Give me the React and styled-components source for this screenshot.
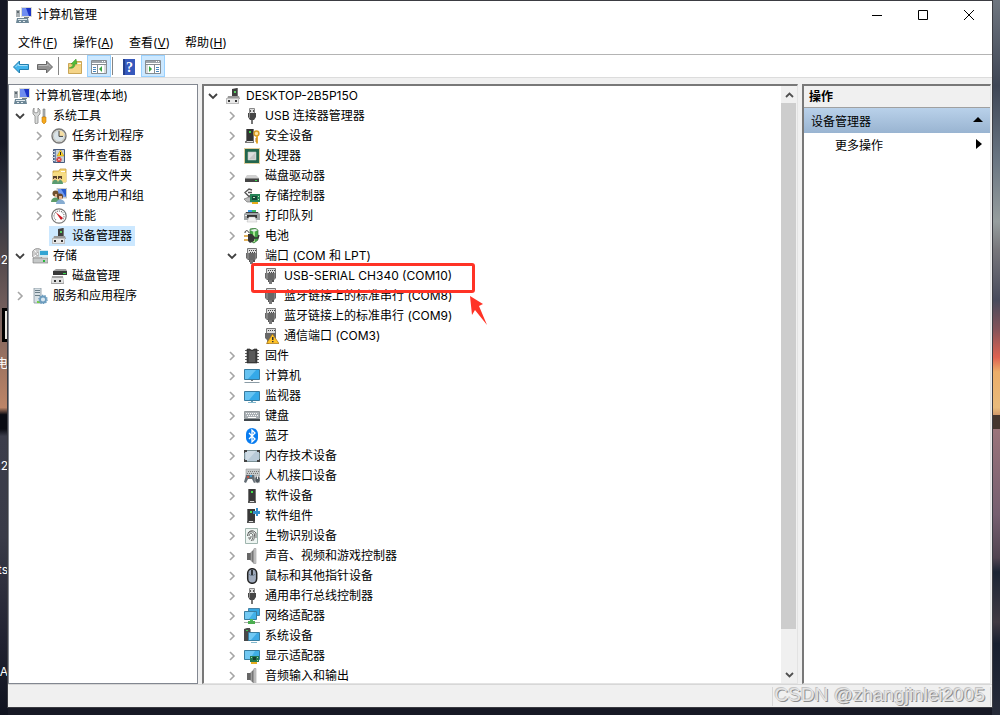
import styled, { createGlobalStyle } from "styled-components";

const GlobalStyle = createGlobalStyle`
  * {
    box-sizing: border-box;
  }
  body {
    margin: 0;
    font-family: Inter, "Noto Sans CJK SC", sans-serif;
    font-size: 12px;
    color: #000;
    overflow: hidden;
  }
  button {
    font: inherit;
    color: inherit;
    border: 0;
    padding: 0;
    background: none;
  }
`;

const icons = {
  computer: (
    <>
      <path d="M5 0h11v10H5z" fill="#d9dcd6" />
      <path d="M6 1h9v8H6z" fill="#1c35c8" />
      <path d="M6 1h4l3 8H6z" fill="#6f8df0" />
      <path d="M0 3h4v7H0z" fill="#a9b0b4" />
      <path d="M1 4h2v2H1z" fill="#5e6a70" />
      <path d="M8 10h5v1H8z" fill="#777f83" />
      <path d="M1 11h11l1 5H0z" fill="#6d8796" />
      <path d="M2 12h9v1H2zM3 14h2v1H3zM7 14h2v1H7z" fill="#e2eaee" />
    </>
  ),
  tools: (
    <>
      <path d="M2 0v4l2 1 2-1V0l2 2v4L6 8v7l-2 1-1-1V8L1 6V2z" fill="#d8dad9" stroke="#888" strokeWidth=".8" />
      <path d="M11 1h2v8h-2z" fill="#b4b9ba" stroke="#666" strokeWidth=".5" />
      <path d="M10 9h4v5l-2 2-2-2z" fill="#f5a91c" stroke="#c57806" strokeWidth=".6" />
    </>
  ),
  clock: (
    <>
      <circle cx="8" cy="8" r="7" fill="#f2efe1" stroke="#777" strokeWidth="1.4" />
      <circle cx="8" cy="8" r="5.6" fill="#d9e3e8" stroke="#c2c5c2" />
      <path d="M8 2.5A5.5 5.5 0 0 1 13.5 8H8z" fill="#f6dfa5" />
      <path d="M8 3v5.4h4" fill="none" stroke="#444" />
    </>
  ),
  events: (
    <>
      <path d="M2.5 1.5h11v13h-11z" fill="#7289ad" stroke="#485c7e" />
      <path d="M5 2h8v12H5z" fill="#c9d2da" />
      <path d="M1 3.5h3M1 6.5h3M1 9.5h3M1 12.5h3" stroke="#d5dbe2" />
      <path d="M9.5 2l3.5 6H6z" fill="#ffd629" stroke="#b18500" strokeWidth=".5" />
      <path d="M9.5 4v3" stroke="#222" />
      <circle cx="8" cy="11.5" r="2.6" fill="#d53a38" />
      <path d="M7 10.5l2 2m0-2l-2 2" stroke="#fff" strokeWidth=".8" />
    </>
  ),
  sharedFolder: (
    <>
      <path d="M2 3h6l1-2h6v13H2z" fill="#f5d878" stroke="#c69a36" strokeWidth=".8" />
      <path d="M10 3h4v1h-4z" fill="#fff" />
      <path d="M2 5h13v9H2z" fill="#f6dc84" />
      <path d="M2 8h4v3H2zM7 8h4v3H7z" fill="#57422c" />
      <path d="M1 16c0-5 6-6 6-1 0-4 5-4 5 1z" fill="#5b9b70" />
      <path d="M3 10h2v2H3zM8 10h2v2H8z" fill="#e5bb91" />
    </>
  ),
  users: (
    <>
      <path d="M6 0h10v10H6z" fill="#d7d9d7" stroke="#a6a8a7" strokeWidth=".6" />
      <path d="M7 1h8v8H7z" fill="#2458cc" />
      <path d="M7 1h3l5 8H7z" fill="#7199ed" />
      <circle cx="4.5" cy="5.5" r="3" fill="#70512e" />
      <path d="M0 14c0-6 9-6 9 0z" fill="#5c9b68" />
      <circle cx="9" cy="8.5" r="3" fill="#65462c" />
      <path d="M8 8h3v3H8zM4 6h2v3H4z" fill="#e6b48c" />
      <path d="M5 16c0-6 9-6 9 0z" fill="#86acd1" />
    </>
  ),
  performance: (
    <>
      <circle cx="8" cy="8" r="7.2" fill="#fff" stroke="#777" strokeWidth="1.2" />
      <path d="M5 12A5 5 0 1 1 11 12" fill="none" stroke="#777" strokeWidth="1.2" strokeDasharray="1 1" />
      <path d="M4.5 4l5.5 8 2-2z" fill="#c91820" />
    </>
  ),
  device: (
    <>
      <path d="M7 1l5-1v9H7z" fill="#3f3f3f" />
      <path d="M12 0h1v9h-1z" fill="#777" />
      <path d="M9 3h2v2H9z" fill="#59ce62" />
      <path d="M3 8h11l1 3H2z" fill="#989898" />
      <path d="M1 10h13v6H1z" fill="#bdbdbd" />
      <path d="M2 11h11v4H2z" fill="#e8e8e8" />
      <path d="M3 12h2v2H3zM10 12h2v2h-2z" fill="#353535" />
    </>
  ),
  storage: (
    <>
      <circle cx="5.5" cy="6" r="5.5" fill="#ccc" stroke="#8a8a8a" strokeWidth=".8" />
      <path d="M5.5 6l-3-4M5.5 6l-4 3" stroke="#fff" />
      <circle cx="5.5" cy="6" r="1.5" fill="#eee" stroke="#888" strokeWidth=".6" />
      <path d="M7 2h9v7H7z" fill="#d5e9ee" />
      <path d="M8 3h8v4H8z" fill="#32a5d3" />
      <path d="M1 10h15v5H1z" fill="#c5c8c8" stroke="#777" strokeWidth=".6" />
      <path d="M11 12h2v2h-2z" fill="#27b93a" />
    </>
  ),
  disk: (
    <>
      <path d="M2 3l3-2h10l1 2v4H2z" fill="#9b9b9b" />
      <path d="M2 3h14v4H2z" fill="#383838" />
      <path d="M12 5h3v1h-3z" fill="#39dc4b" />
      <path d="M1 8h11l1 8H0z" fill="#a3a3a3" />
      <path d="M1 10h11v5H1z" fill="#e2e2e2" />
      <path d="M3 12h2v2H3zM8 12h2v2H8z" fill="#333" />
    </>
  ),
  services: (
    <>
      <path d="M2 0h7v15H2z" fill="#d7e0e5" stroke="#85969e" strokeWidth=".8" />
      <path d="M3 2.5h5M3 4.5h5M3 7.5h5" stroke="#6b7f89" />
      <path d="M5 13h3v2H5z" fill="#75d243" />
      <circle cx="11" cy="11.5" r="3" fill="#d8e7f1" stroke="#6c9cbe" strokeWidth="1.8" />
      <circle cx="11" cy="11.5" r="4.2" fill="none" stroke="#6c9cbe" strokeWidth="1.2" strokeDasharray="1.3 1.3" />
    </>
  ),
  usb: (
    <>
      <path d="M5.5.5h5v5h-5z" fill="#ddd" stroke="#888" />
      <path d="M6 2h1v2H6zM9 2h1v2H9z" fill="#555" />
      <path d="M4 5h8v4l-2 3H6L4 9z" fill="#454545" />
      <path d="M7 12h2v4H7z" fill="#777" />
      <path d="M5 5h1v5H5z" fill="#888" />
    </>
  ),
  security: (
    <>
      <path d="M2 1h8v12H2z" fill="#333" />
      <path d="M2 1h1v12H2zM9 1h1v12H9z" fill="#777" />
      <path d="M5 3h2v2H5z" fill="#38d647" />
      <path d="M1 13h9v2H1z" fill="#777" />
      <path d="M3 13h6v1H3z" fill="#ddd" />
      <circle cx="12.5" cy="5.5" r="2.4" fill="#ffe5a0" stroke="#d99b22" strokeWidth="1.5" />
      <path d="M12 8h2v7l-1 1-1-1z" fill="#e5a92f" />
      <path d="M11 11h2M11 13h2" stroke="#bf7e14" />
    </>
  ),
  processor: (
    <>
      <path d="M.5.5h15v15H.5z" fill="none" stroke="#bd9d38" strokeDasharray="1 1" />
      <path d="M1 1h14v14H1z" fill="#23664d" />
      <path d="M4 4h8v8H4z" fill="#dedede" stroke="#b6c5bd" strokeWidth=".6" />
      <path d="M5 11l6-6v6z" fill="#c6c6c6" />
    </>
  ),
  drive: (
    <>
      <path d="M3 7h9l3 3H1z" fill="#d1d1d1" />
      <path d="M1 10h14v4H1z" fill="#444" />
      <path d="M1 10h14v1H1z" fill="#888" />
      <path d="M11 12h2v1h-2z" fill="#36dc4c" />
    </>
  ),
  controller: (
    <>
      <path d="M8 2L5 1 1 4.5l4 4 3-2M4 4.5h4" fill="none" stroke="#555" strokeWidth="1.4" />
      <path d="M0 11l5-2 5 2v3H3z" fill="#bbb" stroke="#666" strokeWidth=".6" />
      <path d="M6 6h10v8H6z" fill="#248456" />
      <path d="M8 8h5v4H8z" fill="#164637" />
      <path d="M9 9h2v1H9zM14 8h1v1h-1zM14 11h1v1h-1z" fill="#bce8bd" />
      <path d="M8 14h6v2H8z" fill="#e7ad1c" />
    </>
  ),
  printer: (
    <>
      <path d="M4 2h4v2H4z" fill="#3999e5" />
      <path d="M8 2h4v2H8z" fill="#36b968" />
      <path d="M2 4h12l2 2v6H0V6z" fill="#9fa4a6" />
      <path d="M2 4h12v1H2z" fill="#434343" />
      <path d="M3 7h10v3H3z" fill="#333" />
      <path d="M5 9h6l2 5H3z" fill="#f0f0f0" stroke="#aaa" strokeWidth=".4" />
      <path d="M1 7h2v1H1z" fill="#eee" />
    </>
  ),
  battery: (
    <>
      <path d="M6 1l5-1 3 2v10l-4 3-4-2z" fill="#45a646" stroke="#3c743d" strokeWidth=".7" />
      <path d="M6 2l5-1 3 1-4 2z" fill="#e9eeee" />
      <path d="M10 4v10" stroke="#a8e891" strokeWidth="2" />
      <path d="M1 5c0-4 4-2 4 0" fill="none" stroke="#333" />
      <path d="M0 8h4M0 12h4" stroke="#d89824" strokeWidth="1.5" />
      <path d="M4 6h4l3 3-1 4-4 2-2-2z" fill="#363636" />
      <path d="M10 10h4l1-3" fill="none" stroke="#333" strokeWidth="1.4" />
    </>
  ),
  port: (
    <>
      <path d="M3.5.5h9v5h-9z" fill="#ddd" stroke="#777" />
      <path d="M5 2h1v1H5zM7 2h1v1H7zM9 2h1v1H9zM11 2h1v1h-1zM6 4h1v1H6zM8 4h1v1H8zM10 4h1v1h-1z" fill="#444" />
      <path d="M2 5h11v5l-2 2H4l-2-2z" fill="#686868" />
      <path d="M3 5h2v6H3zM11 5h1v6h-1z" fill="#818181" />
      <path d="M5 12h1v2H5zM9 12h2v2H9z" fill="#555" />
      <path d="M6 12h3v4H6z" fill="#777" />
    </>
  ),
  portWarning: (
    <>
      <path d="M3.5.5h9v5h-9z" fill="#ddd" stroke="#777" />
      <path d="M5 2h1v1H5zM7 2h1v1H7zM9 2h1v1H9zM11 2h1v1h-1z" fill="#444" />
      <path d="M2 5h11v5l-2 2H4l-2-2z" fill="#686868" />
      <path d="M4 12h2v4H4z" fill="#777" />
      <path d="M9.5 6L16 15.5H3.5z" fill="#ffc328" stroke="#a87415" strokeWidth=".7" />
      <path d="M9 9h1.5v3H9zM9 13h1.5v1.2H9z" fill="#333" />
    </>
  ),
  firmware: (
    <>
      <path d="M1 2.5h14M1 5.5h14M1 8.5h14M1 11.5h14M1 14.5h14" stroke="#666" />
      <path d="M3 1h3l1 1h2l1-1h3v14H3z" fill="#424242" stroke="#222" strokeWidth=".6" />
      <path d="M5 3h6v11H5z" fill="#5a5a5a" />
    </>
  ),
  pc: (
    <>
      <path d="M.5 1.5h15v10H.5z" fill="#35a9e8" stroke="#387b9f" />
      <path d="M1 2h11l-8 9H1z" fill="#66c3f2" />
      <path d="M7 12h2v1H7z" fill="#777" />
      <path d="M1 14h14l1 1H0z" fill="#8b9ca6" />
    </>
  ),
  monitor: (
    <>
      <path d="M.5 3.5h15v9H.5z" fill="#35a9e8" stroke="#387b9f" />
      <path d="M1 4h11l-7 8H1z" fill="#66c3f2" />
      <path d="M7 13h2v1H7z" fill="#6699b0" />
      <path d="M4 14h8v1H4z" fill="#83b8cd" />
    </>
  ),
  keyboard: (
    <>
      <path d="M.5 3.5h15v7H.5z" fill="#a9afb4" stroke="#91979a" />
      <path d="M2 5.5h12M3 7.5h11" stroke="#f7f7f7" strokeDasharray="1 1" />
      <path d="M4 9.5h8" stroke="#fff" />
      <path d="M0 11h16v2H0z" fill="#41484d" />
    </>
  ),
  bluetooth: (
    <>
      <rect x="2" width="12" height="16" rx="6" fill="#087cf0" />
      <path d="M5 5l6 6-3 3V2l3 3-6 6" fill="none" stroke="#fff" strokeWidth="1.3" />
    </>
  ),
  memory: (
    <>
      <path d="M0 2h16v12H0z" fill="#444" />
      <path d="M3 2h10v2h2v8h-2v2H3v-2H1V4h2z" fill="#b8cad8" />
      <path d="M3 3h9l-8 9H2V4h1z" fill="#cedbe5" />
      <path d="M3 2.5h10M3 13.5h10M.5 5v6M15.5 5v6" stroke="#7b9095" />
    </>
  ),
  hid: (
    <>
      <path d="M2 1h14v7H2z" fill="#c5c9ca" stroke="#999" strokeWidth=".6" />
      <path d="M4 3.5h11M3 5.5h12" stroke="#777" strokeDasharray="1 1" />
      <path d="M2 7h8l2 7-2 1-2-4H4l-2 4-2-1z" fill="#626b73" />
      <circle cx="4" cy="9" r="1" fill="#e2503b" />
      <circle cx="7" cy="8" r="1" fill="#40a9ed" />
      <rect x="11" y="8" width="5" height="7" rx="2.5" fill="#505960" stroke="#d2d2d2" strokeWidth=".6" />
      <path d="M13.5 8v3" stroke="#eee" />
    </>
  ),
  software: (
    <>
      <path d="M4 1h8v12H4z" fill="#393939" />
      <path d="M4 1h1v12H4zM11 1h1v12h-1z" fill="#777" />
      <path d="M7 3h2v2H7z" fill="#43de4b" />
      <path d="M4 13h8v2H4z" fill="#555" />
      <path d="M6 13h4v1H6z" fill="#ddd" />
    </>
  ),
  component: (
    <>
      <path d="M3 1h8v12H3z" fill="#383838" />
      <path d="M3 1h1v12H3z" fill="#777" />
      <path d="M6 3h2v2H6z" fill="#43de4b" />
      <path d="M3 13h8v2H3z" fill="#555" />
      <path d="M5 13h4v1H5z" fill="#ddd" />
      <path d="M9 3h3V0h2v3h2v3h-2v2h-2V6H9z" fill="#328dcb" />
    </>
  ),
  biometric: (
    <>
      <path d="M1.5.5h12v15h-12z" fill="#eef5f2" stroke="#9fb5ae" />
      <path
        d="M4 5c2-3 6-3 8 0v5M3.5 8c0-6 7-5 7-1 0 4-1 5-2 6M5 8c0-4 4-3 4 0 0 2-1 4-2 5M5 9c0 3 1 3 2 0V8"
        fill="none"
        stroke="#555"
        strokeWidth=".9"
      />
    </>
  ),
  sound: (
    <>
      <path d="M3 5h3v7H3z" fill="#666" />
      <path d="M6 5l4-4v15l-4-4z" fill="#9c9c9c" />
      <path d="M10 .5h2v15h-2z" fill="#cbcbcb" stroke="#888" strokeWidth=".5" />
      <path d="M6.5 5v7M8.5 3v11" stroke="#666" strokeWidth=".7" />
    </>
  ),
  mouse: (
    <>
      <rect x="3.7" y=".7" width="9" height="14.6" rx="4.5" fill="#9faabc" stroke="#242424" strokeWidth="1.5" />
      <path d="M5 6c1 2 5 2 6 0" fill="none" stroke="#67788b" />
      <path d="M7 2h2v5H7z" fill="#303438" />
    </>
  ),
  network: (
    <>
      <path d="M4.5.5h11v7h-11z" fill="#37a7e2" stroke="#4783a5" />
      <path d="M.5 3.5h12v8H.5z" fill="#42b1e9" stroke="#397d9f" />
      <path d="M1 4h9l-5 7H1z" fill="#73caf4" />
      <path d="M6 11h3v3H6z" fill="#4dbb5b" />
      <path d="M0 14h16v1H0z" fill="#aaa" />
      <path d="M4 13h7v3H4z" fill="#4cad50" />
    </>
  ),
  system: (
    <>
      <path d="M0 1l3-1h3v13H0z" fill="#484848" />
      <path d="M2 2h2v1H2z" fill="#43c557" />
      <path d="M6 1h1v11H6z" fill="#999" />
      <path d="M4.5 4.5h11v8h-11z" fill="#3da9e5" stroke="#397d9f" />
      <path d="M5 5h8l-6 7H5z" fill="#70c8f3" />
      <path d="M7 14h6v1H7z" fill="#83b8cd" />
    </>
  ),
  display: (
    <>
      <path d="M.5 2.5h15v9H.5z" fill="#3fb0e8" stroke="#397d9f" />
      <path d="M1 3h10l-5 8H1z" fill="#70c8f3" />
      <path d="M6 8h9v6H6z" fill="#237850" />
      <path d="M9 9h3v3H9z" fill="#163e31" />
      <path d="M7 9h1v1H7zM13 9h1v1h-1zM13 12h1v1h-1z" fill="#a5dba7" />
      <path d="M7 14h6v2H7z" fill="#e6ae20" />
    </>
  ),
  back: (
    <>
      <path d="M.5 8L6.5 2v3.5h9v5h-9V14z" fill="#42b4ec" stroke="#237eae" />
      <path d="M2.5 8l3-3v1.5h9" fill="none" stroke="#a6e0fa" />
    </>
  ),
  forward: (
    <>
      <path d="M15.5 8l-6-6v3.5h-9v5h9V14z" fill="#929292" stroke="#686868" />
      <path d="M1.5 6.5h9V5l3 3" fill="none" stroke="#bbb" />
    </>
  ),
  folderUp: (
    <>
      <path d="M1.5 4.5h7l1-2h5v12h-13z" fill="#f2cf78" stroke="#be963e" strokeWidth=".8" />
      <path d="M10 4h4v1h-4z" fill="#fff" />
      <path d="M2 7h12v7H2z" fill="#f4d488" />
      <path d="M2 9c3-1 4-2 4-4H4l5-5 1 5H8c0 3-2 5-6 4z" fill="#54bd38" stroke="#398b28" strokeWidth=".5" />
    </>
  ),
  treePane: (
    <>
      <path d="M.5 1.5h15v13H.5z" fill="#fff" stroke="#858c92" />
      <path d="M1 2h14v2H1z" fill="#9ca3a9" />
      <path d="M11 2.5h1M13 2.5h1" stroke="#fff" />
      <path d="M1 5.5h14M6.5 6v8" stroke="#858c92" />
      <path d="M2 8.5h3M2 10.5h3M2 12.5h3" stroke="#4786bd" />
      <path d="M11 7v6L8 10z" fill="#3ba642" />
      <path d="M13 6h2v8h-2z" fill="#dadada" />
    </>
  ),
  help: (
    <>
      <path d="M2 0h12v16H2z" fill="#3658bc" />
      <path d="M2 0h2v16H2z" fill="#24408c" />
      <text x="5" y="13" fontFamily="Liberation Serif" fontSize="14" fontWeight="700" fill="#fff">?</text>
    </>
  ),
  actionPane: (
    <>
      <path d="M.5 1.5h15v13H.5z" fill="#fff" stroke="#858c92" />
      <path d="M1 2h14v2H1z" fill="#9ca3a9" />
      <path d="M11 2.5h1M13 2.5h1" stroke="#fff" />
      <path d="M1 5.5h14M9.5 6v8" stroke="#858c92" />
      <path d="M11 8.5h3M11 10.5h3M11 12.5h3" stroke="#4786bd" />
      <path d="M4 7v6l3-3z" fill="#3ba642" />
      <path d="M1 6h2v8H1z" fill="#dadada" />
    </>
  ),
};

const Icon = ({ name }) => (
  <IconSvg viewBox="0 0 16 16" aria-hidden="true">
    {icons[name]}
  </IconSvg>
);

const consoleTree = {
  label: "计算机管理(本地)",
  icon: "computer",
  bare: true,
  children: [
    {
      label: "系统工具",
      icon: "tools",
      children: [
        { label: "任务计划程序", icon: "clock", closed: true },
        { label: "事件查看器", icon: "events", closed: true },
        { label: "共享文件夹", icon: "sharedFolder", closed: true },
        { label: "本地用户和组", icon: "users", closed: true },
        { label: "性能", icon: "performance", closed: true },
        { label: "设备管理器", icon: "device", selected: true },
      ],
    },
    {
      label: "存储",
      icon: "storage",
      children: [{ label: "磁盘管理", icon: "disk" }],
    },
    { label: "服务和应用程序", icon: "services", closed: true },
  ],
};

const deviceTree = {
  label: "DESKTOP-2B5P15O",
  icon: "device",
  children: [
    { label: "USB 连接器管理器", icon: "usb", closed: true },
    { label: "安全设备", icon: "security", closed: true },
    { label: "处理器", icon: "processor", closed: true },
    { label: "磁盘驱动器", icon: "drive", closed: true },
    { label: "存储控制器", icon: "controller", closed: true },
    { label: "打印队列", icon: "printer", closed: true },
    { label: "电池", icon: "battery", closed: true },
    {
      label: "端口 (COM 和 LPT)",
      icon: "port",
      children: [
        { label: "USB-SERIAL CH340 (COM10)", icon: "port", marked: true },
        { label: "蓝牙链接上的标准串行 (COM8)", icon: "port" },
        { label: "蓝牙链接上的标准串行 (COM9)", icon: "port" },
        { label: "通信端口 (COM3)", icon: "portWarning" },
      ],
    },
    { label: "固件", icon: "firmware", closed: true },
    { label: "计算机", icon: "pc", closed: true },
    { label: "监视器", icon: "monitor", closed: true },
    { label: "键盘", icon: "keyboard", closed: true },
    { label: "蓝牙", icon: "bluetooth", closed: true },
    { label: "内存技术设备", icon: "memory", closed: true },
    { label: "人机接口设备", icon: "hid", closed: true },
    { label: "软件设备", icon: "software", closed: true },
    { label: "软件组件", icon: "component", closed: true },
    { label: "生物识别设备", icon: "biometric", closed: true },
    { label: "声音、视频和游戏控制器", icon: "sound", closed: true },
    { label: "鼠标和其他指针设备", icon: "mouse", closed: true },
    { label: "通用串行总线控制器", icon: "usb", closed: true },
    { label: "网络适配器", icon: "network", closed: true },
    { label: "系统设备", icon: "system", closed: true },
    { label: "显示适配器", icon: "display", closed: true },
    { label: "音频输入和输出", icon: "sound", closed: true },
  ],
};

const menus = [
  ["文件", "F"],
  ["操作", "A"],
  ["查看", "V"],
  ["帮助", "H"],
];

const Chevron = ({ open }) => (
  <svg width="10" height="10" viewBox="0 0 10 10" aria-hidden="true">
    <path
      d={open ? "M1 3l4 4 4-4" : "M3 1l4 4-4 4"}
      fill="none"
      stroke={open ? "#404040" : "#a6a6a6"}
      strokeWidth={open ? "1.8" : "1.6"}
    />
  </svg>
);

const TreeItem = ({ node }) => {
  const expandable = node.closed || node.children;
  return (
    <li role="treeitem" aria-expanded={expandable ? !node.closed : undefined}>
      <Row>
        {!node.bare && (
          <Toggle as={expandable ? "button" : "span"} aria-label={expandable ? node.label : undefined}>
            {expandable && <Chevron open={!node.closed} />}
          </Toggle>
        )}
        <Node $selected={node.selected}>
          <Icon name={node.icon} />
          {node.label}
        </Node>
        {node.marked && (
          <>
            <Frame />
            <Pointer viewBox="0 0 20 32" aria-hidden="true">
              <path d="M1 1l13 8-4 2 8 19L6 15l-3 5z" fill="#ff3326" />
            </Pointer>
          </>
        )}
      </Row>
      {node.children && (
        <Group role="group" $flush={node.bare}>
          {node.children.map((child) => (
            <TreeItem key={child.label} node={child} />
          ))}
        </Group>
      )}
    </li>
  );
};

const App = () => {
  return (
    <Desktop>
      <GlobalStyle />
      <Shortcut $top={252}>02</Shortcut>
      <Thumbnail />
      <Shortcut $top={356}>电</Shortcut>
      <Shortcut $top={458}>22</Shortcut>
      <Shortcut $top={562}>ts</Shortcut>
      <Shortcut $top={664}>DA</Shortcut>
      <Window>
        <TitleBar>
          <Icon name="computer" />
          <Title>计算机管理</Title>
          <Caption aria-label="最小化">
            <CaptionIcon viewBox="0 0 12 12">
              <path d="M1 6.5h10" />
            </CaptionIcon>
          </Caption>
          <Caption aria-label="最大化">
            <CaptionIcon viewBox="0 0 12 12">
              <path d="M1.5 1.5h9v9h-9z" />
            </CaptionIcon>
          </Caption>
          <Caption aria-label="关闭">
            <CaptionIcon viewBox="0 0 12 12">
              <path d="M1 1l10 10M11 1L1 11" />
            </CaptionIcon>
          </Caption>
        </TitleBar>
        <MenuBar>
          {menus.map(([label, key]) => (
            <button key={key}>
              {label}(<u>{key}</u>)
            </button>
          ))}
        </MenuBar>
        <Toolbar>
          <Tool aria-label="后退"><Icon name="back" /></Tool>
          <Tool aria-label="前进"><Icon name="forward" /></Tool>
          <Separator />
          <Tool aria-label="向上"><Icon name="folderUp" /></Tool>
          <Tool $active aria-label="显示控制台树"><Icon name="treePane" /></Tool>
          <Separator />
          <Tool aria-label="帮助"><Icon name="help" /></Tool>
          <Tool $active aria-label="显示操作窗格"><Icon name="actionPane" /></Tool>
        </Toolbar>
        <Panes>
          <ConsolePane>
            <Tree role="tree" $inset={3}>
              <TreeItem node={consoleTree} />
            </Tree>
          </ConsolePane>
          <DevicePane>
            <Tree role="tree" $inset={1}>
              <TreeItem node={deviceTree} />
            </Tree>
            <Scrollbar>
              <ScrollButton aria-label="向上滚动">
                <svg width="9" height="6" viewBox="0 0 9 6">
                  <path d="M1 5l3.5-3.5L8 5" fill="none" stroke="#505050" strokeWidth="1.8" />
                </svg>
              </ScrollButton>
              <Track>
                <Thumb />
              </Track>
              <ScrollButton aria-label="向下滚动">
                <svg width="9" height="6" viewBox="0 0 9 6">
                  <path d="M1 1l3.5 3.5L8 1" fill="none" stroke="#505050" strokeWidth="1.8" />
                </svg>
              </ScrollButton>
            </Scrollbar>
          </DevicePane>
          <ActionPane>
            <ActionTitle>操作</ActionTitle>
            <ActionGroup>
              设备管理器
              <svg width="10" height="6" viewBox="0 0 10 6"><path d="M0 5l5-5 5 5z" /></svg>
            </ActionGroup>
            <ActionLink>
              更多操作
              <svg width="6" height="10" viewBox="0 0 6 10"><path d="M0 0l6 5-6 5z" /></svg>
            </ActionLink>
          </ActionPane>
        </Panes>
        <StatusBar>
          <StatusCell $width={133} />
          <StatusCell $width={85} />
          <StatusCell $width={2} />
        </StatusBar>
      </Window>
      <Watermark>CSDN @zhangjinlei2005</Watermark>
    </Desktop>
  );
};

export default App;

const IconSvg = styled.svg`
  width: 16px;
  height: 16px;
  flex: none;
`;

const Desktop = styled.main`
  position: relative;
  height: 100vh;
  padding: 1px 8px 8px;
  background:
    linear-gradient(#151724 0 20%, #343744 30%, #4d4549 35%, #77615e 44%, #a47762 52%, #bd8568 57%, #090b13 58% 60%, #3b3d4b 61%, #393b48 75%, #202231 90%, #10131f) left / 8px 100% no-repeat,
    linear-gradient(#6f7680 0, #3f4655 12%, #687481 22%, #969e9e 31%, #77767b 35%, #484b5c 42%, #83535a 46%, #df6251 50%, #ecad68 52%, #e8bb7c 57%, #d29a6b 58%, #45362f 58% 60%, #9b747b 60%, #765f70 72%, #514451 78%, #1b2434 80%, #413a43 87%, #182030 90%, #272b39) right / 8px 100% no-repeat,
    #171925;
`;

const Shortcut = styled.span`
  position: absolute;
  top: ${(p) => p.$top}px;
  left: 0;
  width: 8px;
  height: 16px;
  line-height: 16px;
  overflow: hidden;
  direction: rtl;
  color: #fff;
`;

const Thumbnail = styled.span`
  position: absolute;
  top: 308px;
  left: 2px;
  width: 20px;
  height: 34px;
  border: 3px solid #000;
  background: #e8e6e0;
`;

const Window = styled.section`
  position: relative;
  display: flex;
  flex-direction: column;
  height: 100%;
  background: #f0f0f0;
  box-shadow: 0 0 0 1px #3b3c42;
`;

const TitleBar = styled.header`
  display: flex;
  align-items: center;
  height: 28px;
  padding-left: 8px;
  background: #fff;
`;

const Title = styled.h1`
  flex: 1;
  margin: 0;
  padding-left: 5px;
  font-size: 12px;
  line-height: 16px;
  font-weight: 400;
`;

const Caption = styled.button`
  display: grid;
  place-items: center;
  width: 46px;
  height: 28px;
`;

const CaptionIcon = styled.svg`
  width: 12px;
  height: 12px;
  fill: none;
  stroke: #000;
`;

const MenuBar = styled.nav`
  display: flex;
  align-items: center;
  gap: 15px;
  height: 26px;
  padding-left: 10px;
  background: #fff;
  border-bottom: 1px solid #b4b4b4;
`;

const Toolbar = styled.div`
  display: flex;
  align-items: center;
  height: 23px;
  padding-left: 1px;
  background: #fff;
  border-bottom: 1px solid #dcdcdc;
`;

const Tool = styled.button`
  display: grid;
  place-items: center;
  width: 24px;
  height: 22px;
  padding-top: 1px;
  background: ${(p) => (p.$active ? "#cce8ff" : "transparent")};
  border: ${(p) => (p.$active ? "1px solid #99d1ff" : "0")};
`;

const Separator = styled.span`
  width: 1px;
  height: 18px;
  margin: 0 4px 0 1px;
  background: #858585;
`;

const Panes = styled.div`
  flex: 1;
  min-height: 0;
  display: grid;
  grid-template-columns: 190px 1fr 189px;
  grid-template-rows: 100%;
  gap: 4px;
  padding: 6px 1px 0 0;
`;

const ConsolePane = styled.aside`
  background: #fff;
  border: 1px solid #828790;
  padding-top: 1px;
  overflow: hidden;
`;

const DevicePane = styled.section`
  display: flex;
  background: #fff;
  border: 1px solid #e3e3e3;
  border-top: 2px solid #787878;
  border-left: 2px solid #787878;
  overflow: hidden;
`;

const Tree = styled.ul`
  flex: 1;
  margin: 0;
  padding: 0 0 0 ${(p) => p.$inset}px;
  list-style: none;
`;

const Group = styled.ul`
  list-style: none;
  margin: 0 0 0 ${(p) => (p.$flush ? 0 : 19)}px;
  padding: 0;
`;

const Row = styled.div`
  position: relative;
  display: flex;
  align-items: center;
  height: 20px;
`;

const Toggle = styled.button`
  display: grid;
  place-items: center;
  flex: none;
  width: 16px;
  height: 20px;
  margin-right: 2px;
`;

const Node = styled.button`
  display: flex;
  align-items: center;
  gap: 5px;
  height: 20px;
  padding: 0 3px 0 2px;
  line-height: 20px;
  white-space: nowrap;
  background: ${(p) => (p.$selected ? "#cce8ff" : "transparent")};
`;

const Frame = styled.span`
  position: absolute;
  z-index: 1;
  top: -3px;
  left: 8px;
  width: 224px;
  height: 30px;
  border: 3px solid #ff3326;
  border-radius: 3px;
  pointer-events: none;
`;

const Pointer = styled.svg`
  position: absolute;
  z-index: 1;
  top: 29px;
  left: 226px;
  width: 20px;
  height: 32px;
`;

const Scrollbar = styled.div`
  display: flex;
  flex-direction: column;
  width: 16px;
  background: #f0f0f0;
`;

const ScrollButton = styled.button`
  display: grid;
  place-items: center;
  height: 17px;
`;

const Track = styled.div`
  flex: 1;
`;

const Thumb = styled.div`
  width: 15px;
  height: 93.5%;
  background: #cdcdcd;
`;

const ActionPane = styled.aside`
  background: #fff;
  border: 1px solid #e3e3e3;
  border-top: 2px solid #787878;
  border-left: 2px solid #787878;
`;

const ActionTitle = styled.h2`
  margin: 0;
  height: 22px;
  padding-left: 5px;
  line-height: 22px;
  font-size: 12px;
  font-weight: 700;
  background: #f0f0f0;
  border-bottom: 1px solid #a0a0a0;
`;

const ActionGroup = styled.button`
  display: flex;
  align-items: center;
  justify-content: space-between;
  width: 100%;
  height: 25px;
  padding: 0 7px 1px;
  background: linear-gradient(#b9d1ea, #99b4d1);
`;

const ActionLink = styled.button`
  display: flex;
  align-items: center;
  justify-content: space-between;
  width: 100%;
  height: 22px;
  padding: 0 8px 0 31px;
`;

const StatusBar = styled.footer`
  display: flex;
  justify-content: flex-end;
  height: 23px;
  padding: 2px 0 1px;
  border-top: 1px solid #d7d7d7;
`;

const StatusCell = styled.span`
  width: ${(p) => p.$width}px;
  border-left: 1px solid #d7d7d7;
`;

const Watermark = styled.span`
  position: absolute;
  right: 15px;
  bottom: 8px;
  font: 19px/24px "Liberation Sans", sans-serif;
  color: #e4e4e4;
  text-shadow: 1px 1px 0 #8c8c8c, -1px -1px 0 #c4c4c4;
`;
